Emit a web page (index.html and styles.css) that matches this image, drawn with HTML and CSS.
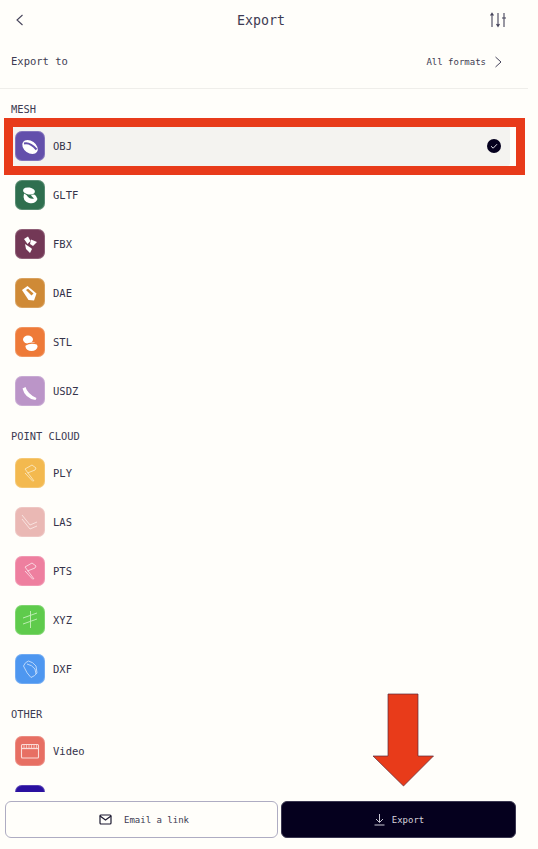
FILE: index.html
```html
<!DOCTYPE html>
<html lang="en">
<head>
    <meta charset="UTF-8">
    <meta name="viewport" content="width=device-width, initial-scale=1.0">
    <title>Export</title>
    <link rel="stylesheet" href="styles.css">
</head>
<body>
<div class="page">

    <div class="header">
        <svg class="header-icon" width="12" height="14" viewBox="0 0 12 14"><path d="M8.500 2 L3 7 L8.500 12" fill="none" stroke="#45435a" stroke-width="1.100"/></svg>
        <h1>Export</h1>
        <svg class="header-icon" width="18" height="16" viewBox="0 0 18 16" fill="none" stroke="#45435a" stroke-width="1.100">
            <path d="M3 1.500 V15 M1.500 3.500 L3 1.200 L4.500 3.500"/>
            <path d="M9 1 V14.500 M7.500 12 L9 14.500 L10.500 12"/>
            <path d="M15 1 V15 M13 6 H17"/>
        </svg>
    </div>

    <div class="export-to">
        <span>Export to</span>
        <span class="all-formats">All formats
            <svg width="10" height="12" viewBox="0 0 10 12"><path d="M2.500 1 L8 6 L2.500 11" fill="none" stroke="#45435a" stroke-width="1"/></svg>
        </span>
    </div>

    <div class="list">

        <div class="section-label">MESH</div>

        <div class="row row-selected">
            <div class="format-icon obj">
                <svg width="30" height="30" viewBox="0 0 30 30"><ellipse cx="15" cy="16" rx="8.500" ry="6" transform="rotate(35 15 16)" fill="#fff"/><path d="M9 12.500 Q15 11 21.500 18.500" fill="none" stroke="#6350ab" stroke-width="2"/></svg>
            </div>
            <span>OBJ</span>
            <svg class="check" width="14" height="14" viewBox="0 0 14 14"><circle cx="7" cy="7" r="7" fill="#05001e"/><path d="M4 7.200 L6.200 9.200 L10 5.200" fill="none" stroke="#d8d6e0" stroke-width="1"/></svg>
            <div class="highlight"></div>
        </div>

        <div class="row">
            <div class="format-icon gltf">
                <svg width="30" height="30" viewBox="0 0 30 30"><ellipse cx="14" cy="11" rx="6" ry="3.500" transform="rotate(10 14 11)" fill="#fff"/><path d="M9 13.500 Q7 21 14 23 Q20 24.500 22.500 19 L21 16 Q19 13.500 16 15.500 L19 18.500 Q15 20 11.500 15Z" fill="#fff"/></svg>
            </div>
            <span>GLTF</span>
        </div>

        <div class="row">
            <div class="format-icon fbx">
                <svg width="30" height="30" viewBox="0 0 30 30"><path d="M9 10 L13 7.500 L15.500 12 L12.500 15Z M16 10.500 L22 13 L18 17 L15 15Z M10 15 L16 19 L17 20 L15 24 L11 20Z" fill="#fff"/></svg>
            </div>
            <span>FBX</span>
        </div>

        <div class="row">
            <div class="format-icon dae">
                <svg width="30" height="30" viewBox="0 0 30 30"><path d="M7 12 L12.500 8 L21.500 15.500 L19 22.500 L13.500 22Z" fill="#fff"/><path d="M11 12 L13 10.800 L18.500 15.500 L16.500 17.500Z" fill="#cf8a36"/></svg>
            </div>
            <span>DAE</span>
        </div>

        <div class="row">
            <div class="format-icon stl">
                <svg width="30" height="30" viewBox="0 0 30 30"><ellipse cx="13" cy="12.500" rx="5" ry="4" fill="#fff"/><ellipse cx="16.500" cy="19.500" rx="6" ry="4.500" fill="#fff"/><path d="M10.500 18 Q15 15 22.500 17" fill="none" stroke="#ee7a38" stroke-width="1.200"/></svg>
            </div>
            <span>STL</span>
        </div>

        <div class="row">
            <div class="format-icon usdz">
                <svg width="30" height="30" viewBox="0 0 30 30"><path d="M7.500 12.500 L10.500 11 Q12.500 18 21.500 22 L20.500 24 Q10 22.500 7.500 12.500Z" fill="#fff"/></svg>
            </div>
            <span>USDZ</span>
        </div>

        <div class="section-label">POINT CLOUD</div>

        <div class="row">
            <div class="format-icon ply">
                <svg width="30" height="30" viewBox="0 0 30 30" fill="none" stroke="#fbe6bd" stroke-width="0.900"><path d="M10 11 L17 7 L21 10 L20 12 L12.500 15"/><path d="M10 11 L19 23"/><path d="M10 15 L18 23.500"/></svg>
            </div>
            <span>PLY</span>
        </div>

        <div class="row">
            <div class="format-icon las">
                <svg width="30" height="30" viewBox="0 0 30 30" fill="none" stroke="#f9e6e3" stroke-width="0.900"><path d="M7 8 L15 18 L22 15"/><path d="M7 12 L15 22 L22 19"/></svg>
            </div>
            <span>LAS</span>
        </div>

        <div class="row">
            <div class="format-icon pts">
                <svg width="30" height="30" viewBox="0 0 30 30" fill="none" stroke="#fbdce5" stroke-width="0.900"><path d="M10 11 L17 7 L21 10 L20 12 L12.500 15"/><path d="M10 11 L19 23"/><path d="M10 15 L18 23.500"/></svg>
            </div>
            <span>PTS</span>
        </div>

        <div class="row">
            <div class="format-icon xyz">
                <svg width="30" height="30" viewBox="0 0 30 30" fill="none" stroke="#c6efbc" stroke-width="0.900"><path d="M8 13 L22 8"/><path d="M8 19 L22 14"/><path d="M15.500 6 V23"/></svg>
            </div>
            <span>XYZ</span>
        </div>

        <div class="row">
            <div class="format-icon dxf">
                <svg width="30" height="30" viewBox="0 0 30 30" fill="none" stroke="#c6defb" stroke-width="0.900"><path d="M8.500 12 Q10 8 13.500 7 Q18 8 21 12 L22 19 Q20 22 16 23.500 Q12 20 8.500 12Z"/><path d="M12 10 Q17 11 20 15 L21 20"/></svg>
            </div>
            <span>DXF</span>
        </div>

        <div class="section-label">OTHER</div>

        <div class="row">
            <div class="format-icon video">
                <svg width="30" height="30" viewBox="0 0 30 30" fill="none" stroke="#fbdcd8" stroke-width="1.100"><rect x="6.500" y="8.500" width="17" height="13.500" rx="1"/><path d="M6.500 12.500 H23.500" stroke-width="1.300"/><path d="M9 8.500 V12 M11.500 8.500 V12 M14 8.500 V12 M16.500 8.500 V12 M19 8.500 V12 M21.500 8.500 V12" stroke-width="0.700"/></svg>
            </div>
            <span>Video</span>
        </div>

        <div class="row">
            <div class="format-icon more"></div>
        </div>

    </div>

    <div class="footer">
        <button class="btn btn-email">
            <svg width="13" height="11" viewBox="0 0 13 11" fill="none" stroke="#1c1930" stroke-width="1.200"><rect x="1" y="1" width="11" height="9" rx="1"/><path d="M1 2 L6.500 6 L12 2"/></svg>
            Email a link
        </button>
        <button class="btn btn-export">
            <svg width="13" height="13" viewBox="0 0 13 13" fill="none" stroke="#c9c7d3" stroke-width="1"><path d="M6.500 1 V9 M3 6 L6.500 9.500 L10 6"/><path d="M1.500 12 H11.500"/></svg>
            Export
        </button>
    </div>

    <!-- big annotation arrow -->
    <svg class="arrow" width="64" height="96" viewBox="0 0 64 96"><path d="M16 1 H46 V63 H61.500 L31.500 93 L1 63 H16Z" fill="#e83b1a" stroke="#5a2a3a" stroke-width="0.700"/></svg>

</div>
</body>
</html>
```

FILE: styles.css
```css
* {
    margin: 0;
    padding: 0;
    box-sizing: border-box;
}
body {
    font-family: 'DejaVu Sans Mono', monospace;
    background: #fffefa;
    color: #3d3b52;
}
.page {
    position: relative;
    width: 538px;
    height: 849px;
    display: flex;
    flex-direction: column;
    overflow: hidden;
}
.header {
    height: 40px;
    padding: 0 31px 0 14px;
    display: flex;
    align-items: center;
    justify-content: space-between;
    flex-shrink: 0;
}
.header-icon {
    display: block;
}
h1 {
    font-size: 13.3px;
    font-weight: normal;
    padding-left: 7px;
}
.export-to {
    width: 528px;
    height: 49px;
    padding: 0 25px 6px 11px;
    display: flex;
    align-items: center;
    justify-content: space-between;
    border-bottom: 1px solid #efeeea;
    font-size: 10.5px;
    flex-shrink: 0;
}
.all-formats {
    display: flex;
    align-items: center;
    gap: 7px;
    margin-top: 2px;
    font-size: 9px;
}
.list {
    flex: 1;
    min-height: 0;
    overflow: hidden;
    padding: 12px 0 0 11px;
}
.section-label {
    height: 16px;
    line-height: 16px;
    font-size: 10.4px;
    margin-bottom: 9px;
}
.row {
    position: relative;
    width: 499px;
    height: 40px;
    margin-bottom: 9px;
    margin-left: 2px;
    padding-left: 2px;
    display: flex;
    align-items: center;
    gap: 8px;
    font-size: 10.5px;
    color: #35334a;
}
.row + .section-label {
    margin-top: 17px;
}
.row-selected {
    background: #f4f3f0;
    border-radius: 3px;
    width: 497px;
}
.row:has(+ .section-label) {
    margin-bottom: 0;
}
.format-icon {
    width: 30px;
    height: 30px;
    border-radius: 7px;
    flex-shrink: 0;
    box-shadow: inset 0 0 0 1px rgba(255, 255, 255, 0.2);
}
.format-icon svg {
    display: block;
}
.obj { background: #6350ab; }
.gltf { background: #2f6f4f; }
.fbx { background: #733856; }
.dae { background: #cf8a36; }
.stl { background: #ee7a38; }
.usdz { background: #bb95c8; }
.ply { background: #f3b94f; }
.las { background: #eab8b4; }
.pts { background: #ee7f9f; }
.xyz { background: #5fcb4c; }
.dxf { background: #4e97f0; }
.video { background: #e76f63; }
.more { background: #2a10a0; }
.check {
    margin-left: auto;
    margin-right: 9px;
}
.highlight {
    position: absolute;
    top: -8px;
    left: -9px;
    right: -15px;
    bottom: -9px;
    border: 9px solid #e83b1a;
}
.footer {
    height: 57px;
    padding: 9px 22px 11px 5px;
    display: flex;
    gap: 3px;
    background: #fffefa;
    flex-shrink: 0;
}
.btn {
    height: 37px;
    border-radius: 6px;
    font-family: 'DejaVu Sans Mono', monospace;
    font-size: 9px;
    display: flex;
    align-items: center;
    justify-content: center;
    gap: 12px;
}
.btn-email {
    width: 273px;
    padding-left: 5px;
    background: #fffefa;
    border: 1px solid #aeacc2;
    color: #3d3b52;
}
.btn-export {
    width: 235px;
    background: #05001e;
    border: 1px solid #3a3650;
    color: #d5d3dc;
    gap: 6px;
}
.arrow {
    position: absolute;
    top: 693px;
    left: 372px;
}
```
